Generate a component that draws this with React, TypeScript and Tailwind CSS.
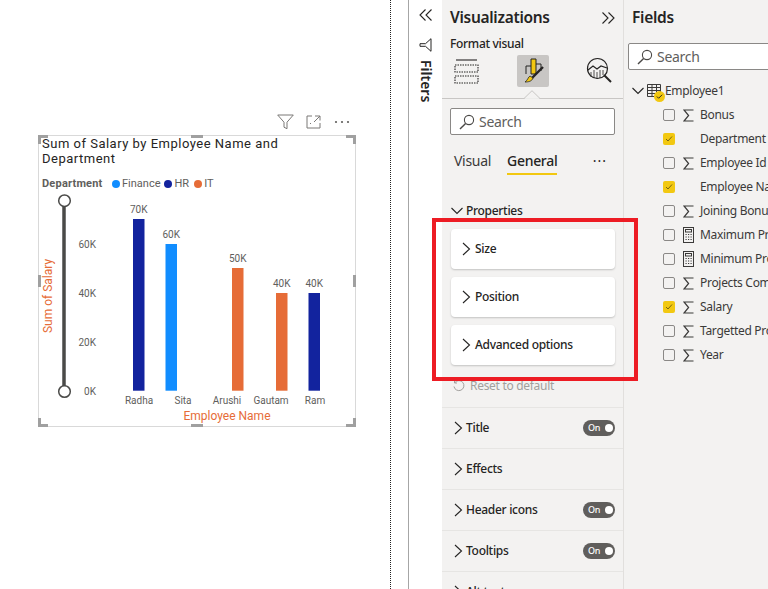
const UI = "font-['Noto_Sans',sans-serif] tracking-[-0.3px]";

function Chevron({ dir = "right", className = "" }: { dir?: "right" | "down"; className?: string }) {
  return (
    <svg viewBox="0 0 12 14" className={`h-[14px] w-[12px] shrink-0 ${className}`} fill="none" stroke="#252423" strokeWidth="1.1">
      {dir === "right" ? <path d="M3 1l6.5 6L3 13" /> : <path d="M0.5 4L6 9.5 11.5 4" />}
    </svg>
  );
}

function SearchGlyph() {
  return (
    <svg viewBox="0 0 16 16" className="h-[16px] w-[16px] shrink-0" fill="none" stroke="#4a4846" strokeWidth="1.1">
      <circle cx="10" cy="6" r="4.6" />
      <path d="M6.6 9.4L1 15" strokeWidth="1.4" />
    </svg>
  );
}

function SearchBox({ className }: { className: string }) {
  return (
    <div className={`flex h-[27px] items-center gap-[4px] rounded-[2px] border border-[#8a8886] bg-white pl-[8px] text-[14px] text-[#605e5c] ${className}`}>
      <SearchGlyph />
      <span>Search</span>
    </div>
  );
}

function Sigma() {
  return (
    <svg viewBox="0 0 11 13" className="h-[13px] w-[11px]" fill="none" stroke="#3b3a39" strokeWidth="1.2">
      <path d="M10.5 1H1l4.6 5.5L1 12h9.5" />
    </svg>
  );
}

function Calc() {
  return (
    <svg viewBox="0 0 11 16" className="h-[16px] w-[11px]" fill="none" stroke="#3b3a39" strokeWidth="1">
      <rect x="0.5" y="0.5" width="10" height="15" />
      <rect x="2.5" y="2.5" width="6" height="2.5" />
      <path d="M2.5 7.5h1.2M5 7.5h1.2M7.5 7.5h1.2M2.5 10h1.2M5 10h1.2M7.5 10h1.2M2.5 12.5h1.2M5 12.5h1.2M7.5 12.5h1.2" />
    </svg>
  );
}

function FieldRow({ name, icon, checked }: { name: string; icon: "sigma" | "calc" | "none"; checked?: boolean }) {
  return (
    <div className="flex h-[24px] items-center whitespace-nowrap">
      {checked ? (
        <div className="flex h-[12px] w-[12px] shrink-0 items-center justify-center rounded-[2px] bg-[#f2c811]">
          <svg viewBox="0 0 10 10" className="h-[10px] w-[10px]" fill="none" stroke="#6b5a10" strokeWidth="0.9">
            <path d="M2 5l2 2 4-4.5" />
          </svg>
        </div>
      ) : (
        <div className="h-[12px] w-[12px] shrink-0 rounded-[2px] border border-[#8a8886] bg-[#f3f2f1]" />
      )}
      <div className="ml-[8px] flex w-[17px] shrink-0 justify-start">
        {icon === "sigma" && <Sigma />}
        {icon === "calc" && <Calc />}
      </div>
      <span className="text-[12px] text-[#3b3a39]">{name}</span>
    </div>
  );
}

function Toggle() {
  return (
    <div className="flex h-[16px] w-[32px] items-center justify-between rounded-full bg-[#605e5c] pl-[5px] pr-[2px] text-[9px] text-white">
      <span>On</span>
      <span className="h-[8px] w-[8px] rounded-full bg-white" />
    </div>
  );
}

function Card({ label }: { label: string }) {
  return (
    <div className="flex h-[40px] items-center gap-[3px] rounded-[4px] bg-white pl-[9px] text-[12px] font-medium text-[#252423] shadow-[0_1px_2px_rgba(0,0,0,0.2)]">
      <Chevron />
      <span>{label}</span>
    </div>
  );
}

function Section({ label, toggle }: { label: string; toggle?: boolean }) {
  return (
    <div className="flex h-[41px] shrink-0 items-center justify-between border-b border-[#e6e5e3] pl-[10px] pr-[8px] text-[12px] font-medium text-[#252423]">
      <div className="flex items-center gap-[2px]">
        <Chevron />
        <span>{label}</span>
      </div>
      {toggle && <Toggle />}
    </div>
  );
}

function Handle({ className }: { className: string }) {
  return <div className={`absolute bg-[#a0a0a0] ${className}`} />;
}

function Corner({ className }: { className: string }) {
  return <div className={`absolute h-[9px] w-[10px] border-[#a0a0a0] ${className}`} />;
}

function Plot() {
  const bars = [
    { x: 133, top: 219, c: "#12239e", label: "70K" },
    { x: 165.5, top: 244, c: "#118dff", label: "60K" },
    { x: 232, top: 268, c: "#e66c37", label: "50K" },
    { x: 276, top: 293, c: "#e66c37", label: "40K" },
    { x: 308.5, top: 293, c: "#12239e", label: "40K" },
  ];
  const names = [
    ["Radha", 139],
    ["Sita", 183],
    ["Arushi", 227],
    ["Gautam", 271],
    ["Ram", 315],
  ] as const;
  const ticks = [
    ["60K", 244],
    ["40K", 293],
    ["20K", 342],
    ["0K", 391],
  ] as const;
  return (
    <svg viewBox="38 192 318 233" className="h-[233px] w-[318px]" fontFamily="'Roboto',sans-serif">
      <line x1="64" y1="206" x2="64" y2="386" stroke="#4a4a48" strokeWidth="3.5" />
      <circle cx="64.5" cy="200.7" r="5.8" fill="#fff" stroke="#4a4a48" strokeWidth="1.5" />
      <circle cx="64.5" cy="391.5" r="5.8" fill="#fff" stroke="#4a4a48" strokeWidth="1.5" />
      <text x="0" y="0" transform="translate(52 296) rotate(-90)" textAnchor="middle" fontSize="12" fill="#e66c37">
        Sum of Salary
      </text>
      {ticks.map(([t, y]) => (
        <text key={t} x="96" y={y + 3.5} textAnchor="end" fontSize="10" fill="#605e5c">
          {t}
        </text>
      ))}
      {bars.map((b) => (
        <g key={b.x}>
          <rect x={b.x} y={b.top} width="11.5" height={390.7 - b.top} fill={b.c} />
          <text x={b.x + 5.75} y={b.top - 6} textAnchor="middle" fontSize="10" fill="#605e5c">
            {b.label}
          </text>
        </g>
      ))}
      {names.map(([n, x]) => (
        <text key={n} x={x} y="404" textAnchor="middle" fontSize="10" fill="#605e5c">
          {n}
        </text>
      ))}
      <text x="227" y="420" textAnchor="middle" fontSize="12" fill="#e66c37">
        Employee Name
      </text>
    </svg>
  );
}

function Visual() {
  return (
    <div className="relative ml-[38px] mt-[135px] h-[292px] w-[318px] border border-[#d9d9d9] bg-white font-['Roboto',sans-serif] tracking-normal">
      <div className="absolute -top-[22px] left-[238px] flex items-center">
        <svg viewBox="0 0 17 16" className="h-[16px] w-[17px]" fill="none" stroke="#7a7876" strokeWidth="1">
          <path d="M0.7 1h15.6L10 8.2v6.5l-3-1.5V8.2z" />
        </svg>
        <svg viewBox="0 0 15 14" className="ml-[12px] h-[14px] w-[15px]" fill="none" stroke="#7a7876" strokeWidth="1">
          <path d="M6 1H1v12h13V8M9 1h5v4.5M14 1L8 7M5 8l-1 1" />
        </svg>
        <svg viewBox="0 0 16 4" className="ml-[13px] h-[4px] w-[16px]" fill="#605e5c">
          <circle cx="2" cy="2" r="1.1" />
          <circle cx="8" cy="2" r="1.1" />
          <circle cx="14" cy="2" r="1.1" />
        </svg>
      </div>
      <Corner className="-left-[1px] -top-[1px] border-l-[3px] border-t-[3px]" />
      <Corner className="-right-[1px] -top-[1px] border-r-[3px] border-t-[3px]" />
      <Corner className="-bottom-[1px] -left-[1px] border-b-[3px] border-l-[3px]" />
      <Corner className="-bottom-[1px] -right-[1px] border-b-[3px] border-r-[3px]" />
      <Handle className="-top-[1px] left-[152px] h-[3px] w-[12px]" />
      <Handle className="-bottom-[1px] left-[152px] h-[3px] w-[12px]" />
      <Handle className="-left-[1px] top-[139px] h-[12px] w-[3px]" />
      <Handle className="-right-[1px] top-[139px] h-[12px] w-[3px]" />
      <div className="pl-[3px] text-[13px] leading-[15px] tracking-[0.5px] text-[#252423]">
        Sum of Salary by Employee Name and
        <br />
        Department
      </div>
      <div className="mt-[11px] flex items-center pl-[3px] text-[11px] leading-[14px] text-[#605e5c]">
        <span className="w-[70px] font-bold tracking-[0.2px]">Department</span>
        <span className="h-[8px] w-[8px] rounded-full bg-[#118dff]" />
        <span className="ml-[2px]">Finance</span>
        <span className="ml-[4px] h-[8px] w-[8px] rounded-full bg-[#12239e]" />
        <span className="ml-[2px]">HR</span>
        <span className="ml-[5px] h-[8px] w-[8px] rounded-full bg-[#e66c37]" />
        <span className="ml-[2px]">IT</span>
      </div>
      <div className="-ml-px mt-[1px]">
        <Plot />
      </div>
    </div>
  );
}

function FiltersPane() {
  return (
    <div className="flex w-[34px] shrink-0 flex-col items-center border-l border-[#a6a6a6] bg-white pt-[9px]">
      <svg viewBox="0 0 14 12" className="h-[12px] w-[14px] shrink-0" fill="none" stroke="#252423" strokeWidth="1.1">
        <path d="M6.5 0.5L1 6l5.5 5.5M12.5 0.5L7 6l5.5 5.5" />
      </svg>
      <svg viewBox="0 0 13 14" className="mt-[17px] h-[14px] w-[13px] shrink-0" fill="none" stroke="#252423" strokeWidth="1">
        <path d="M12 0.7v12.6L6.5 8.3H1V5.7h5.5z" />
      </svg>
      <span className="mt-[8px] text-[14px] font-semibold leading-none tracking-normal text-[#252423] [writing-mode:vertical-rl]">Filters</span>
    </div>
  );
}

function VizPane() {
  return (
    <div className="flex w-[182px] shrink-0 flex-col overflow-hidden border-r border-[#e1dfdd] bg-[#f3f2f1] text-[#252423]">
      <div className="flex h-[36px] shrink-0 items-center justify-between px-[8px]">
        <span className="text-[15.5px] font-semibold">Visualizations</span>
        <svg viewBox="0 0 14 12" className="h-[12px] w-[14px]" fill="none" stroke="#252423" strokeWidth="1.1">
          <path d="M1.5 0.5L7 6l-5.5 5.5M7.5 0.5L13 6l-5.5 5.5" />
        </svg>
      </div>
      <div className="pl-[8px] text-[12px] font-medium leading-[16px]">Format visual</div>
      <div className="relative flex h-[47px] shrink-0 items-start justify-between border-b border-[#c8c6c4] pl-[12px] pr-[11px] pt-[3px]">
        <svg viewBox="0 0 25 26" className="mt-[4px] h-[26px] w-[25px]" fill="none" stroke="#252423" strokeWidth="1.1">
          <path d="M2 1h21" />
          <path d="M1 6h23v7H1zM1 17h23v7H1z" strokeDasharray="1.5 1" />
        </svg>
        <div className="flex h-[32px] w-[32px] items-center justify-center rounded-[2px] bg-[#c8c6c4]">
          <svg viewBox="0 0 24 26" className="h-[26px] w-[24px]" fill="none">
            <path d="M10 1h5v15h-5z" fill="#f2c811" stroke="#252423" />
            <path d="M15 6h5v7M10 8H5v8" stroke="#252423" />
            <path d="M22 9L11 20" stroke="#252423" strokeWidth="2.4" />
            <path d="M4 24c3 0 7-.5 8-4l-3-2c-2 1-2 4-5 6z" fill="#f2c811" stroke="#252423" strokeWidth="0.8" />
          </svg>
        </div>
        <svg viewBox="0 0 26 26" className="mt-[2px] h-[26px] w-[26px]" fill="none" stroke="#252423" strokeWidth="1.2">
          <circle cx="11.5" cy="11.5" r="10" />
          <path d="M2 13l5-4 4 3 4-3 6 2" />
          <path d="M5 15v5M8 13v8M11 15v7M14 13v8M17 13v5" strokeWidth="0.8" />
          <path d="M18 18l7 7" strokeWidth="2" />
        </svg>
        <svg viewBox="0 0 16 9" className="absolute -bottom-px left-[82px] h-[9px] w-[16px]">
          <path d="M0 8.5L8 0.7l8 7.8" fill="#f3f2f1" stroke="#c8c6c4" />
          <path d="M1 9h14" stroke="#f3f2f1" strokeWidth="1.4" />
        </svg>
      </div>
      <SearchBox className="mx-[8px] mt-[9px] w-[165px] shrink-0" />
      <div className="relative flex h-[40px] shrink-0 items-end pl-[12px] text-[14px]">
        <span className="pb-[2px] leading-[24px] text-[#3b3a39]">Visual</span>
        <span className="ml-[16px] border-b-2 border-[#f2c811] font-medium leading-[24px]">General</span>
        <span className="absolute right-[16px] top-[19px] text-[14px] leading-none tracking-[1px]">···</span>
      </div>
      <div className="mt-[28px] flex shrink-0 items-center gap-[3px] pl-[9px] text-[12px] font-medium leading-[16px]">
        <Chevron dir="down" />
        <span>Properties</span>
      </div>
      <div className="mt-[10px] flex shrink-0 flex-col gap-[8px] pl-[9px] pr-[8px]">
        <Card label="Size" />
        <Card label="Position" />
        <Card label="Advanced options" />
      </div>
      <div className="flex h-[43px] shrink-0 items-start gap-[5px] border-b border-[#e6e5e3] pl-[11px] pt-[13px] text-[12px] leading-[16px] text-[#a19f9d]">
        <svg viewBox="0 0 12 12" className="mt-[2px] h-[12px] w-[12px]" fill="none" stroke="#a19f9d">
          <path d="M2 2.5A5 5 0 1 1 1 6.5M1.5 0.5v2.5H4" />
        </svg>
        <span>Reset to default</span>
      </div>
      <Section label="Title" toggle />
      <Section label="Effects" />
      <Section label="Header icons" toggle />
      <Section label="Tooltips" toggle />
      <Section label="Alt text" />
    </div>
  );
}

function FieldsPane() {
  const rows: { name: string; icon: "sigma" | "calc" | "none"; checked?: boolean }[] = [
    { name: "Bonus", icon: "sigma" },
    { name: "Department", icon: "none", checked: true },
    { name: "Employee Id", icon: "sigma" },
    { name: "Employee Name", icon: "none", checked: true },
    { name: "Joining Bonus", icon: "sigma" },
    { name: "Maximum Projects", icon: "calc" },
    { name: "Minimum Projects", icon: "calc" },
    { name: "Projects Completed", icon: "sigma" },
    { name: "Salary", icon: "sigma", checked: true },
    { name: "Targetted Projects", icon: "sigma" },
    { name: "Year", icon: "sigma" },
  ];
  return (
    <div className="min-w-0 flex-1 overflow-hidden bg-[#f3f2f1] text-[#252423]">
      <div className="flex h-[36px] items-center pl-[8px] text-[15.5px] font-semibold">Fields</div>
      <SearchBox className="ml-[4px] mt-[7px] w-[160px]" />
      <div className="ml-[8px] mt-[9px] flex h-[24px] items-center whitespace-nowrap">
        <Chevron dir="down" />
        <div className="relative ml-[3px] h-[14px] w-[15px] shrink-0">
          <svg viewBox="0 0 15 13" className="h-[13px] w-[15px]" fill="none" stroke="#3b3a39" strokeWidth="1">
            <path d="M0.5 0.5h13v12h-13zM0.5 3.5h13M0.5 6.5h13M0.5 9.5h13M5 0.5v12M9.5 0.5v12" />
          </svg>
          <span className="absolute left-[7px] top-[7px] flex h-[11px] w-[11px] items-center justify-center rounded-full bg-[#f2c811]">
            <svg viewBox="0 0 8 8" className="h-[7px] w-[7px]" fill="none" stroke="#252423" strokeWidth="1.1">
              <path d="M1 4l2 2 4-4" />
            </svg>
          </span>
        </div>
        <span className="ml-[3px] text-[12px] text-[#3b3a39]">Employee1</span>
      </div>
      <div className="pl-[39px]">
        {rows.map((r) => (
          <FieldRow key={r.name} {...r} />
        ))}
      </div>
    </div>
  );
}

export default function App() {
  return (
    <div className={`relative flex h-[589px] w-[768px] overflow-hidden bg-white ${UI}`}>
      <div className="w-[391px] shrink-0 border-r border-dotted border-[#222]">
        <Visual />
      </div>
      <div className="w-[17px] shrink-0" />
      <FiltersPane />
      <VizPane />
      <FieldsPane />
      <div className="pointer-events-none absolute left-[432px] top-[218px] h-[163px] w-[206px] border-[4px] border-[#ed1c24]" />
    </div>
  );
}
